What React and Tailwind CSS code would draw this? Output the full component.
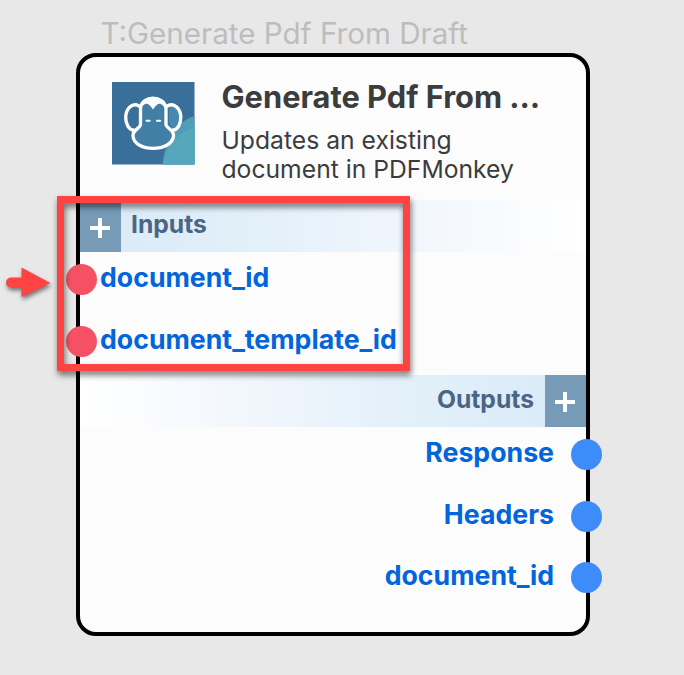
const inputs = ['document_id', 'document_template_id'];
const outputs = ['Response', 'Headers', 'document_id'];

function Plus() {
  return (
    <svg className="block h-[20px] w-[20px]" viewBox="0 0 20 20" fill="none" stroke="#fff" strokeWidth="4">
      <path d="M0 10h20M10 0v20" />
    </svg>
  );
}

function MonkeyLogo() {
  return (
    <svg className="block h-[82.5px] w-[82.5px] shrink-0" viewBox="0 0 82.5 82.5">
      <rect width="82.5" height="82.5" fill="#3a6f99" />
      <path d="M50.500 82.500C53 58 65 39 82.500 34V82.500Z" fill="#4f9db7" />
      <path d="M51 82.500C53 65 66 50 82.500 46V82.500Z" fill="#56a6bc" />
      <path d="M57 27C58 22 67 21 69.500 31C71 41 67 48 62 48L57 42Z" fill="#4589ae" />
      <path
        d="M27.500 25C31 14 50 14 55 25L56 43C58 48 62 50 61.500 55C59 70 24 71 21 55C20 50 25 47 27.500 43Z"
        fill="#427fa6"
      />
      <path d="M28.500 26C29 12.500 53 12.500 53.500 26L51 23.500C47.500 20.500 45 21.500 41 27.500C37 21.500 34.500 20.500 31 23.500Z" fill="#fff" />
      <g fill="none" stroke="#fff" strokeWidth="3.300" strokeLinecap="round" strokeLinejoin="round">
        <path d="M28.500 43V26C30 13 52 13 54 26V43C56 47 62 48 61.500 54C60 70.500 22 70.500 21 54C20.500 48 27 47 28.500 43Z" />
        <path d="M27 24C20 20 14 27 13.700 35C13.500 42 17 48 21.500 48" />
        <path d="M55.500 24C62.500 20 68.500 27 68.800 35C69 42 65.500 48 61 48" />
      </g>
      <path d="M34.500 38.700h3.200M45 38.700h3.200" stroke="#fff" strokeWidth="1.900" strokeLinecap="round" />
    </svg>
  );
}

function InputRow({ name }) {
  return (
    <div className="relative h-[61.5px] pl-[20px] text-[26.7px] leading-[51px] font-bold text-[#0265dc]">
      <span className="absolute top-[12.300px] left-[-14.500px] h-[31px] w-[31px] rounded-full bg-[#f55064]" />
      {name}
    </div>
  );
}

function OutputRow({ name }) {
  return (
    <div className="relative h-[61.5px] pr-[32px] text-right text-[26.7px] leading-[50px] font-bold text-[#0265dc]">
      <span className="absolute top-[12px] right-[-16px] h-[31px] w-[31px] rounded-full bg-[#3e8bfa]" />
      {name}
    </div>
  );
}

export default function App() {
  return (
    <main className="relative h-[675px] w-[684px] overflow-hidden bg-[#e8e8e8] pt-[13px] pl-[76px] font-[Inter,sans-serif]">
      <div className="h-[39.5px] pl-[24.5px] text-[29.6px] leading-[41px] whitespace-nowrap text-[#bdbdbd]">
        T:Generate Pdf From Draft
      </div>
      <section className="h-[583.5px] w-[514px] rounded-[20px] border-4 border-black bg-[#fcfcfc]">
        <header className="flex h-[143.5px] gap-[27px] pl-[32px]">
          <div className="pt-[25.5px]"><MonkeyLogo /></div>
          <div className="pt-[20.5px] whitespace-nowrap text-[#3c3c3c]">
            <h1 className="h-[48.5px] text-[30.8px] leading-[40px] font-bold">Generate Pdf From …</h1>
            <p className="text-[24.7px] leading-[29px]">Updates an existing<br />document in PDFMonkey</p>
          </div>
        </header>
        <div className="flex h-[52px] bg-linear-[to_right,#d8e9f7_0%,#e2f0f9_35%,#eff5fc_60%,#fff_100%]">
          <div className="flex w-[41px] items-center justify-center bg-[#779bb7] pt-[4px] pr-[1px]"><Plus /></div>
          <span className="pl-[10px] text-[24.7px] leading-[49px] font-bold text-[#4b6584]">Inputs</span>
        </div>
        {inputs.map((name) => <InputRow key={name} name={name} />)}
        <div className="flex h-[52px] justify-end bg-linear-[to_left,#d8e9f7_0%,#e2f0f9_35%,#eff5fc_60%,#fff_100%]">
          <span className="pr-[11px] text-[24.7px] leading-[49px] font-bold text-[#4b6584]">Outputs</span>
          <div className="flex w-[41px] items-center justify-center bg-[#779bb7] pt-[2px] pr-[2px]"><Plus /></div>
        </div>
        {outputs.map((name) => <OutputRow key={name} name={name} />)}
      </section>
      <div className="absolute top-[196px] left-[57px] h-[175px] w-[353px] border-[7px] border-[#ff4343] drop-shadow-[1px_4px_3px_rgba(0,0,0,0.55)]" />
      <svg
        className="absolute top-[262px] left-0 h-[42px] w-[56px] overflow-visible drop-shadow-[1px_3px_2px_rgba(0,0,0,0.5)]"
        viewBox="0 0 56 42"
      >
        <path d="M11 20.500H24" stroke="#ff4343" strokeWidth="10" strokeLinecap="round" />
        <path d="M21.500 5.500L50.500 21L21.500 35Z" fill="#ff4343" />
      </svg>
    </main>
  );
}
